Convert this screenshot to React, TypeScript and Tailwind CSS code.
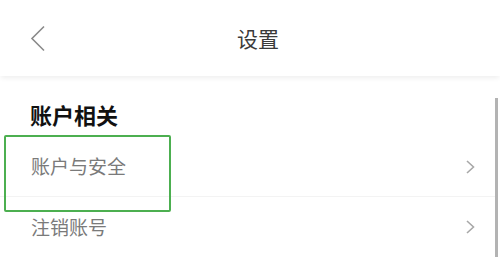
export default function App() {
  return (
    <div
      className="relative w-[500px] h-[261px] overflow-hidden bg-white"
      style={{ fontFamily: '"Noto Sans CJK SC", "Noto Sans", sans-serif' }}
    >
      {/* header */}
      <div className="relative h-[76px] flex items-center pl-[30px] pr-[30px] bg-white shadow-[0_3px_5px_-1px_rgba(0,0,0,0.07)] z-10">
        <svg width="16" height="27" viewBox="0 0 16 27" fill="none">
          <path d="M14 1.5L2 13.5L14 25.5" stroke="#8a8a8a" strokeWidth="1.6" />
        </svg>
        <div className="flex-1 text-center text-[21px] leading-[30px] text-[#3a3a3a]">设置</div>
      </div>

      {/* content */}
      <div className="flex">
        <div className="flex-1 flex flex-col">
          <div className="pl-[30px] pt-[23px] text-[22px] leading-[30px] font-bold text-[#111]">账户相关</div>
          <div className="mt-[8px] h-[60px] flex items-center justify-between pl-[31px] pr-[20px] border-b border-[#f3f3f3]">
            <span className="text-[19px] text-[#7a7a7a]">账户与安全</span>
            <svg width="9" height="14" viewBox="0 0 9 14" fill="none">
              <path d="M1 1L7.5 7L1 13" stroke="#a8a8a8" strokeWidth="1.6" />
            </svg>
          </div>
          <div className="h-[60px] flex items-start justify-between pl-[31px] pr-[20px] pt-[17px]">
            <span className="text-[19px] leading-[26px] text-[#7a7a7a]">注销账号</span>
            <svg width="9" height="14" viewBox="0 0 9 14" fill="none" className="mt-[6px]">
              <path d="M1 1L7.5 7L1 13" stroke="#a8a8a8" strokeWidth="1.6" />
            </svg>
          </div>
        </div>
        {/* scrollbar */}
        <div className="w-[3px] mr-[2px] mt-[22px] bg-[#b3b3b3]" />
      </div>

      {/* highlight box */}
      <div className="absolute left-[4px] top-[135px] w-[167px] h-[77px] border-2 border-[#4caf50] rounded-[2px]" />
    </div>
  );
}
